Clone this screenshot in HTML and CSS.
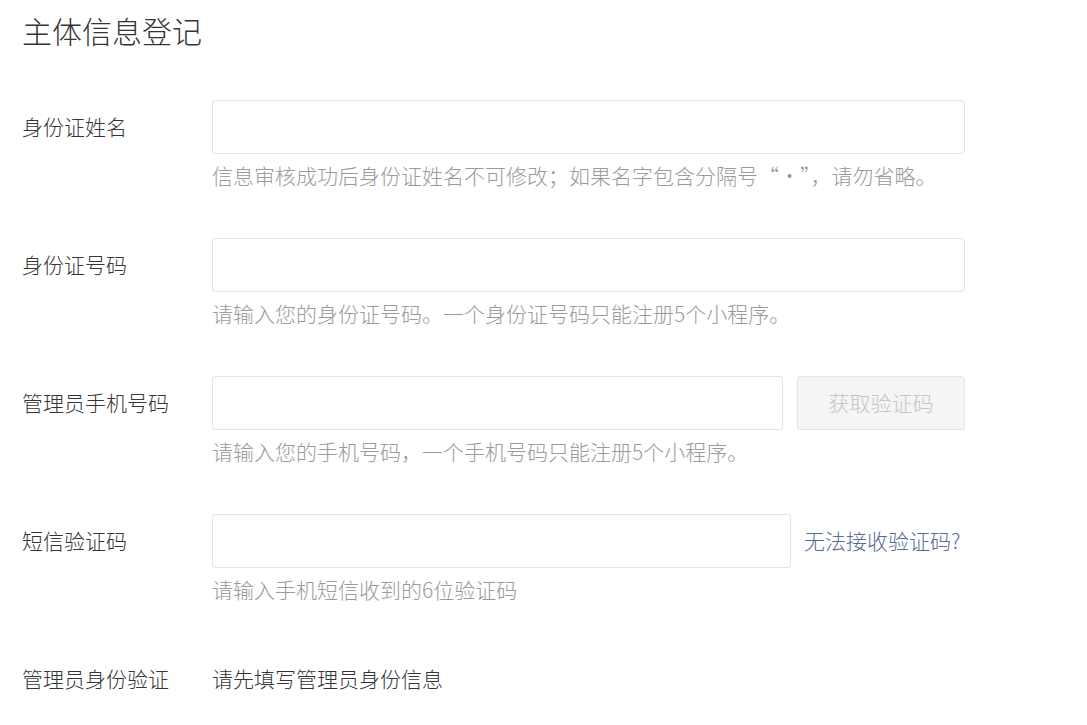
FILE: index.html
```html
<!DOCTYPE html>
<html lang="zh-CN">
<head>
<meta charset="utf-8">
<title>主体信息登记</title>
<link rel="stylesheet" href="styles.css">
</head>
<body>
<div class="page">
  <h1 class="title">主体信息登记</h1>
  <form class="form">
    <div class="row">
      <label class="label">身份证姓名</label>
      <div class="control">
        <div class="field">
          <input class="input" type="text">
        </div>
        <p class="tips">信息审核成功后身份证姓名不可修改；如果名字包含分隔号“·”，请勿省略。</p>
      </div>
    </div>
    <div class="row">
      <label class="label">身份证号码</label>
      <div class="control">
        <div class="field">
          <input class="input" type="text">
        </div>
        <p class="tips">请输入您的身份证号码。一个身份证号码只能注册5个小程序。</p>
      </div>
    </div>
    <div class="row">
      <label class="label">管理员手机号码</label>
      <div class="control">
        <div class="field field-btn">
          <input class="input" type="text">
          <button class="btn" type="button" disabled>获取验证码</button>
        </div>
        <p class="tips">请输入您的手机号码，一个手机号码只能注册5个小程序。</p>
      </div>
    </div>
    <div class="row">
      <label class="label">短信验证码</label>
      <div class="control">
        <div class="field field-link">
          <input class="input input-code" type="text">
          <a class="link" href="#">无法接收验证码?</a>
        </div>
        <p class="tips">请输入手机短信收到的6位验证码</p>
      </div>
    </div>
    <div class="row row-last">
      <label class="label">管理员身份验证</label>
      <div class="control">
        <div class="field">
          <span class="value">请先填写管理员身份信息</span>
        </div>
      </div>
    </div>
  </form>
</div>
</body>
</html>
```

FILE: styles.css
```css
html, body {
  margin: 0;
  padding: 0;
  background: #ffffff;
}

body {
  font-family: "Microsoft YaHei", "Noto Sans CJK SC", "Noto Sans", sans-serif;
  font-weight: 300;
  color: #353535;
}

.page {
  padding: 15px 0 0 22px;
}

.title {
  margin: 0;
  font-size: 30px;
  line-height: 30px;
  font-weight: 300;
  color: #353535;
}

.form {
  margin-top: 55px;
}

.row {
  display: grid;
  grid-template-columns: 190px 753px;
  margin-bottom: 48px;
}

.label {
  box-sizing: border-box;
  height: 54px;
  padding-bottom: 3px;
  display: flex;
  align-items: center;
  font-size: 21px;
  color: #353535;
}

.control {
  display: flex;
  flex-direction: column;
}

.field {
  height: 54px;
  display: flex;
  align-items: center;
}

.field-btn {
  gap: 14px;
}

.field-link {
  gap: 13px;
}

.input {
  box-sizing: border-box;
  flex: 1;
  height: 54px;
  margin: 0;
  padding: 0 14px;
  border: 1px solid #e4e4e4;
  border-radius: 3px;
  background: #ffffff;
  font-family: inherit;
  font-size: 21px;
  color: #353535;
  outline: none;
}

.input-code {
  flex: 0 0 579px;
}

.btn {
  box-sizing: border-box;
  flex: 0 0 168px;
  height: 54px;
  margin: 0;
  padding: 0 0 3px;
  border: 1px solid #e4e6e7;
  border-radius: 3px;
  background: #f4f5f5;
  font-family: inherit;
  font-weight: 300;
  font-size: 21px;
  color: #c6c6c6;
}

.link {
  padding-bottom: 3px;
  font-size: 21px;
  color: #576b95;
  text-decoration: none;
  white-space: nowrap;
}

.tips {
  margin: 6px 0 0;
  font-size: 21px;
  line-height: 30px;
  color: #9a9a9a;
  white-space: nowrap;
}

.value {
  padding-bottom: 3px;
  font-size: 21px;
  color: #353535;
}
```
